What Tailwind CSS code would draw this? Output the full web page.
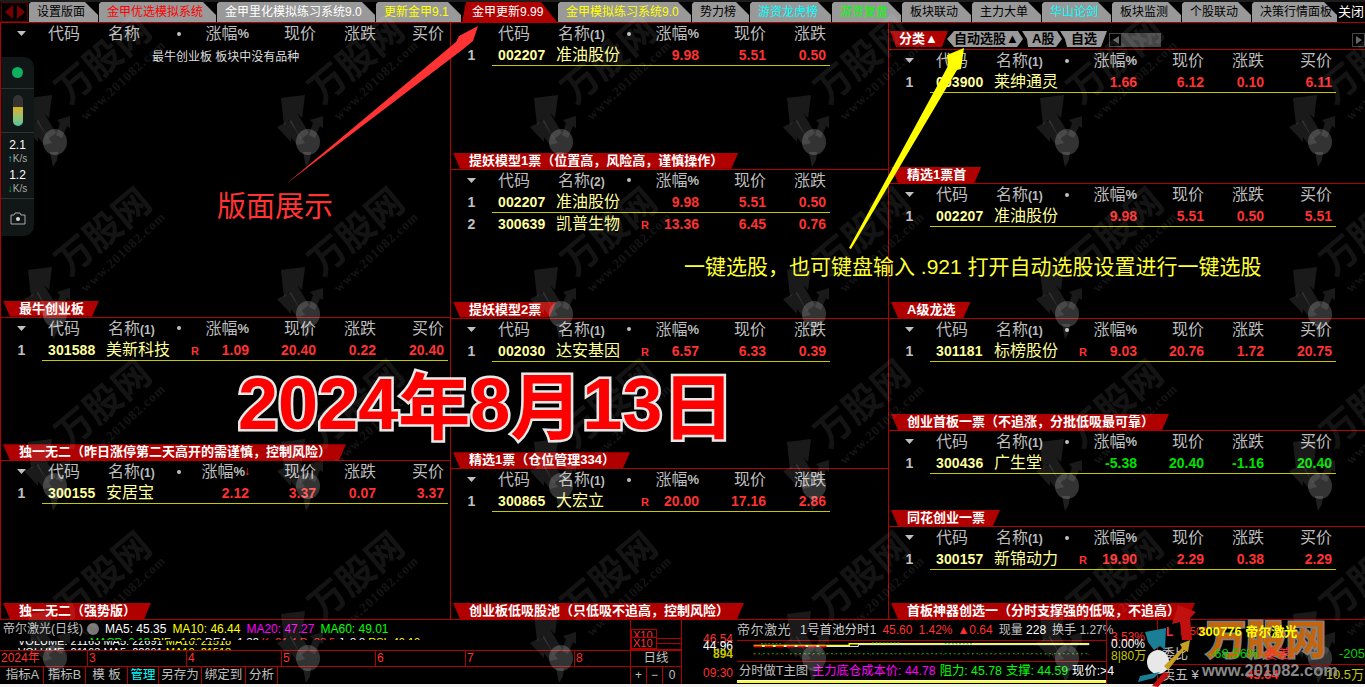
<!DOCTYPE html>
<html lang="zh-CN">
<head>
<meta charset="UTF-8">
<title>金甲更新9.99</title>
<script src="https://cdn.jsdelivr.net/npm/@tailwindcss/browser@4"></script>
</head>
<body class="bg-black">
<div class="relative w-[1365px] h-[687px] overflow-hidden bg-[#f4f4f4] font-['Liberation_Sans','Noto_Sans_CJK_SC',sans-serif] text-[#c0c0c0]">

  <!-- tab bar -->
  <div class="flex h-[23px] bg-black border-b border-[#b00000] border-t-2 border-t-[#1c1c1c]">
    <div class="w-[27px] h-[20px] ml-[1px] mr-[1px] border border-[#5a0000] flex items-center justify-center">
      <svg width="22" height="14" viewBox="0 0 22 14"><path d="M9 0v14L1 7z" fill="#7a0000"/><path d="M13 0v14l8-7z" fill="#7a0000"/></svg>
    </div>
    <div id="tabs" class="flex gap-px"></div>
    <div class="ml-px text-white text-[13px] leading-[20px]">关闭</div>
  </div>

  <!-- panels -->
  <div class="flex h-[597px] bg-black border-b border-[#b00000]">
    <div id="col1" class="w-[451px] flex flex-col border-l border-r border-[#b00000] ml-0"></div>
    <div id="col2" class="w-[438px] flex flex-col border-r border-[#b00000]"></div>
    <div class="w-[476px] flex flex-col">
      <div class="h-[27px] border-b border-[#b00000] flex items-end pb-[2px] pl-[1px] relative">
        <div class="w-[58px] h-[16px] bg-[#b00000] text-white font-bold text-[13px] leading-[16px] pl-[9px] [clip-path:polygon(0_0,100%_0,calc(100%-6px)_100%,6px_100%)]">分类▲</div>
        <div class="w-[76px] -ml-px h-[16px] bg-[#999] text-black font-bold text-[13px] leading-[16px] pl-[7px] [clip-path:polygon(7px_0,calc(100%-5px)_0,100%_50%,calc(100%-6px)_100%,7px_100%,0_50%)]">自动选股▲</div>
        <div class="w-[40px] -ml-px h-[16px] bg-[#999] text-black font-bold text-[13px] leading-[16px] pl-[10px] [clip-path:polygon(0_0,calc(100%-5px)_0,100%_50%,calc(100%-6px)_100%,6px_100%,5px_50%)]">A股</div>
        <div class="w-[47px] -ml-[2px] h-[16px] bg-[#999] text-black font-bold text-[13px] leading-[16px] pl-[11px] [clip-path:polygon(0_0,100%_0,calc(100%-6px)_100%,7px_100%,5px_50%)]">自选</div>
        <div class="ml-[2px] w-[13px] h-[14px] border border-[#444] flex items-center justify-center"><svg width="6" height="8"><path d="M6 0v8L0 4z" fill="#666"/></svg></div>
        <div class="w-[39px] h-[14px] bg-[#444]"></div>
        <div class="ml-auto w-[13px] h-[14px] border border-[#444] flex items-center justify-center"><svg width="6" height="8"><path d="M0 0v8l6-4z" fill="#666"/></svg></div>
      </div>
      <div id="col3" class="flex-1 flex flex-col"></div>
    </div>
  </div>

  <!-- bottom: day chart, buttons, intraday, quote -->
  <div class="flex h-[64px] bg-black text-[12px]">
    <div class="w-[630px] flex flex-col">
      <div class="h-[17px] flex items-center gap-[6px] pl-[3px] text-[12px] whitespace-nowrap">
        <span>帝尔激光(日线)</span>
        <span class="w-[12px] h-[12px] rounded-full bg-[#777] -ml-[2px]"></span>
        <span class="text-white">MA5: 45.35</span>
        <span class="text-[#ffff00]">MA10: 46.44</span>
        <span class="text-[#ff00ff]">MA20: 47.27</span>
        <span class="text-[#00ff00]">MA60: 49.01</span>
      </div>
      <div class="h-[13px] overflow-hidden whitespace-nowrap text-white leading-[11px] text-[11px]">
        <div class="h-[3px] overflow-hidden pl-[90px]"><span class="text-[#00ff00]">MACD: 0.12</span> <span class="text-[#ffff00]">DIF: -1.26</span> <span class="text-white">DEA: -1.32</span> <span class="text-[#ff3030]">K: 21.4 D: 33.5</span> <span class="text-white">J: 8.8</span> <span class="text-[#ffff00]">RSI: 40.10</span></div>
        <div class="h-[5px] overflow-hidden mt-px pl-[18px]"><div class="-mt-[5px]">VOLUME: 21163 MA5: 22691 <span class="text-[#ffff00]">MA10: 21518</span></div></div>
        <div class="h-[4px] overflow-hidden pl-[18px] mt-px">VOLUME: 21163 MA5: 22691 <span class="text-[#ffff00]">MA10: 21518</span></div>
      </div>
      <div class="h-[17px] flex border-t border-b border-[#b00000] text-[#ff3030] text-[12px] leading-[15px] pl-[1px]">
        <div class="w-[86px]">2024年</div>
        <div class="w-[99px] border-l border-[#b00000] pl-px">3</div>
        <div class="w-[95px] border-l border-[#b00000] pl-px">4</div>
        <div class="w-[94px] border-l border-[#b00000] pl-px">5</div>
        <div class="w-[90px] border-l border-[#b00000] pl-px">6</div>
        <div class="w-[109px] border-l border-[#b00000] pl-px">7</div>
        <div class="flex-1 border-l border-[#b00000] pl-px">8</div>
      </div>
      <div class="flex-1 flex text-[12.5px] leading-[17px] text-center">
        <div class="w-[44px] border-r border-[#b00000] pl-[2px]">指标A</div>
        <div class="w-[42px] border-r border-[#b00000]">指标B</div>
        <div class="w-[42px] border-r border-[#b00000]">模 板</div>
        <div class="w-[31px] border-r border-[#b00000] text-[#00ffff]">管理</div>
        <div class="w-[43px] border-r border-[#b00000]">另存为</div>
        <div class="w-[44px] border-r border-[#b00000]">绑定到</div>
        <div class="w-[32px] border-r border-[#b00000]">分析</div>
      </div>
    </div>

    <div class="w-[52px] flex flex-col border-l border-r border-[#b00000] text-[#ff3030]">
      <div class="h-[30px] flex flex-col pt-[9px] overflow-hidden">
        <div class="h-[8px] w-[26px] border border-b-0 border-[#b00000] text-[11px] leading-[10px] pl-px overflow-hidden">X10</div>
        <div class="h-[12px] w-full flex">
          <div class="w-[26px] border border-[#b00000] text-[11px] leading-[10px] pl-px">X10</div>
          <div class="flex-1 border-t border-b border-[#b00000] mt-[1px] h-[6px]"></div>
        </div>
        <div class="h-px bg-[#b00000]"></div>
      </div>
      <div class="h-[17px] border-t border-b border-[#b00000] text-[#c0c0c0] text-center text-[12.5px] leading-[15px]">日线</div>
      <div class="flex-1 flex text-center text-[12px] leading-[17px] text-[#c0c0c0]">
        <div class="w-[16px] border-r border-[#b00000]">+</div>
        <div class="w-[16px] border-r border-[#b00000]">−</div>
        <div class="flex-1">0</div>
      </div>
    </div>

    <div class="w-[55px] flex flex-col items-end pr-[4px] pt-[15px] text-[12px] font-bold">
      <div class="h-[8px] leading-[8px] text-[#ff3030] font-normal">46.54</div>
      <div class="h-[7px] leading-[7px] text-white font-normal">44.96</div>
      <div class="h-[9px] leading-[9px] text-[#c8c800]">894</div>
      <div class="mt-auto mb-[2px] text-[#ff3030] font-normal">09:30</div>
    </div>

    <div class="w-[369px] flex flex-col whitespace-nowrap">
      <div class="h-[20px] flex items-center gap-[6px] text-[12px] leading-[20px]">
        <span class="text-[13px] tracking-[.5px]">帝尔激光</span>
        <span class="ml-[3px] text-[12.5px] text-[#d0d0d0]">1号首池分时1</span>
        <span class="text-[#ff3030]">45.60</span>
        <span class="text-[#ff3030]">1.42%</span>
        <span class="text-[#ff3030] -ml-px">▲0.64</span>
        <span>现量 <span class="text-white">228</span></span>
        <span>换手 1.27%</span>
      </div>
      <svg class="h-[22px] w-[369px] border-t border-b border-[#b00000]" viewBox="0 0 369 22">
        <path d="M0 5H105V3H369" stroke="#ffff00" stroke-width="1.5" fill="none"/>
        <path d="M0 6H115V4H369" stroke="#fff" stroke-width="1" fill="none"/>
        <path d="M0 6H80" stroke="#ff0000" stroke-width="2" stroke-dasharray="9 3"/>
        <path d="M8 3H30M130 2H160M210 3H240" stroke="#00c800" stroke-width="1" stroke-dasharray="2 2"/>
        <path d="M0 14H369" stroke="#00d000" stroke-width="1" stroke-dasharray="2 3"/>
        <path d="M0 15H369" stroke="#ff0000" stroke-width="1" stroke-dasharray="1 7"/>
      </svg>
      <div class="h-[18px] flex items-center gap-[4px] text-[12.3px] pl-[2px]">
        <span>分时做T主图</span>
        <span class="text-[#ff00ff]">主力底仓成本价: 44.78</span>
        <span class="text-[#00ff00]">阻力: 45.78</span>
        <span class="text-[#00ff00]">支撑: 44.59</span>
        <span class="text-white">现价:&gt;4</span>
      </div>
      <div class="h-[3px] bg-[#ffff00] border-t border-white"></div>
    </div>

    <div class="w-[52px] flex flex-col border-l border-r border-[#b00000] pl-[4px] pt-[14px] text-[12px] whitespace-nowrap">
      <div class="h-[7px] leading-[7px] text-[#ff3030]">3.53%</div>
      <div class="h-[7px] leading-[7px] text-white">0.00%</div>
      <div class="h-[10px] leading-[10px] mt-[3px] text-[#c8c800]">8|80万</div>
    </div>

    <div class="relative z-10 flex-1 flex flex-col whitespace-nowrap">
      <div class="h-[26px] flex items-center pl-[8px] gap-[1px]">
        <span class="text-[#ff3030] font-bold">L</span>
        <span class="text-[#ff3030] text-[10px] leading-[10px] ml-[6px] w-[16px] text-center">R 500</span>
        <span class="text-[#ffff00] text-[13px] font-bold ml-[1px]">300776 帝尔激光</span>
      </div>
      <div class="h-[21px] flex items-center pl-[4px] border-b border-[#b00000] text-[13px]">
        <span class="w-[48px]">委比</span>
        <span class="text-[#00d000]">-68.56%</span>
        <span class="text-[#ff3030] ml-[6px]">委差</span>
        <span class="ml-auto text-[#00d000]">-205</span>
      </div>
      <div class="flex-1 flex items-center pl-[4px] pr-[1px] text-[13px]">
        <span class="w-[50px]">卖五 ¥</span>
        <span class="ml-[34px] font-bold text-[#ff3030]">45.64</span>
        <span class="ml-auto text-[#c8c800]">10.5万</span>
      </div>
    </div>
  </div>

  <!-- tiled site watermark -->
  <svg class="absolute inset-0 pointer-events-none" width="1365" height="687">
    <defs>
      <pattern id="wm" width="253" height="172" patternUnits="userSpaceOnUse">
        <text transform="translate(105,62) rotate(-40)" text-anchor="middle" dominant-baseline="middle" font-size="37" font-weight="700" font-family="Noto Sans CJK SC" fill="#fff" fill-opacity=".08">万股网</text>
        <text transform="translate(124,81) rotate(-43)" text-anchor="middle" dominant-baseline="middle" font-size="13" font-weight="700" letter-spacing="1" font-family="Liberation Serif" fill="#fff" fill-opacity=".08">www.201082.com</text>
        <polygon points="28,98 52,95 49,118 44,113 56,133 48,139 36,120 31,125" fill="#fff" fill-opacity=".1"/>
        <polygon points="57,120 70,116 70,128 67,126 62,138 56,135 60,123" fill="#fff" fill-opacity=".1"/>
        <polygon points="24,127 38,120 46,135 52,143 44,145 38,137 38,142" fill="#fff" fill-opacity=".1"/>
        <ellipse cx="55" cy="142" rx="12" ry="13" fill="#fff" fill-opacity=".2"/>
        <path d="M50 152 58 152 57 160 53 167z" fill="#fff" fill-opacity=".12"/>
      </pattern>
    </defs>
    <rect width="1365" height="687" fill="url(#wm)"/>
  </svg>

  <!-- speed widget -->
  <div class="absolute left-px top-[57px] w-[33px] h-[179px] bg-[#111616] rounded-r-[10px] flex flex-col items-center text-white">
    <div class="h-[32px] w-full flex items-center justify-center border-b border-[#2c3232]"><span class="w-[11px] h-[11px] rounded-full bg-[#0fb060]"></span></div>
    <div class="h-[44px] w-full flex items-center justify-center border-b border-[#2c3232]">
      <div class="w-[10px] h-[31px] rounded-full bg-[#333] overflow-hidden flex flex-col justify-end"><div class="h-[19px] bg-linear-to-b from-[#d8b000] to-[#40c8a0]"></div></div>
    </div>
    <div class="h-[66px] w-full flex flex-col items-center border-b border-[#2c3232] pt-[6px] text-[12px] leading-[13px]">
      <span>2.1</span>
      <span class="text-[10px] text-[#aaa] whitespace-nowrap"><span class="text-[#00e0e0]">↑</span>K/s</span>
      <span class="mt-[4px]">1.2</span>
      <span class="text-[10px] text-[#aaa] whitespace-nowrap"><span class="text-[#00c040]">↓</span>K/s</span>
    </div>
    <div class="flex-1 flex items-center justify-center">
      <svg width="16" height="14" viewBox="0 0 16 14" fill="none"><path d="M1 4h3l1-2h5l1 2h4v9H1z" stroke="#aaa"/><circle cx="8" cy="8" r="2" fill="#ddd"/></svg>
    </div>
  </div>

  <!-- annotations drawn over the screenshot -->
  <svg class="absolute inset-0 pointer-events-none" width="1365" height="687">
    <polygon points="286,184 456,42 459,36 478,26 473,41 462,50" fill="#ff3333"/>
    <polygon points="849,248 948,66 947,55 964,48 961,69 957,70 851,249" fill="#ffff00"/>
  </svg>
  <div class="absolute left-[217px] top-[186px] text-[29px] leading-[42px] text-[#ff3333]">版面展示</div>
  <div class="absolute left-[684px] top-[252px] text-[21px] leading-[30px] text-[#ffff33] whitespace-nowrap">一键选股，也可键盘输入 .921 打开自动选股设置进行一键选股</div>
  <div class="absolute left-[238px] top-[359px] text-[72px] leading-[90px] font-bold text-[#ff0000] whitespace-nowrap [-webkit-text-stroke:5px_#e8e8e8] [paint-order:stroke_fill]">2024<span class="relative top-[4px]">年</span>8<span class="relative top-[4px]">月</span>13<span class="relative top-[4px]">日</span></div>

  <!-- site logo, bottom right -->
  <svg class="absolute z-20 left-[1130px] top-[600px] pointer-events-none" width="80" height="87" viewBox="0 0 80 87">
    <polygon points="48,5 66,12 60,18 62,40 52,40 50,22 42,24" fill="#c01010"/>
    <polygon points="15,32 36,28 35,50 30,46 24,50 18,42" fill="#1a7f96"/>
    <ellipse cx="28" cy="62" rx="11" ry="12" fill="#e8e8e8"/>
    <polygon points="34,66 52,48 50,44 60,40 58,52 54,50 38,70" fill="#c8a020"/>
    <polygon points="30,72 10,76 8,82 24,78" fill="#1a7f96"/>
    <polygon points="34,72 22,86 28,87 40,74" fill="#c01010"/>
  </svg>
  <div class="absolute z-[5] left-[1206px] top-[612px] text-[40px] leading-[56px] font-bold text-[#c4640c] whitespace-nowrap [-webkit-text-stroke:3px_#808080] [paint-order:stroke_fill]">万股网</div>
  <div class="absolute z-20 left-[1202px] top-[660px] text-[16.5px] leading-[20px] font-bold text-[#888] whitespace-nowrap">www.201082.com</div>
</div>

<script>
  // top tabs: label, width, classes
  const tabs = [
    ["设置版面", 69, "text-black"], ["金甲优选模拟系统", 117, "text-[#ff0000]"],
    ["金甲里化模拟练习系统9.0", 158, "text-white"], ["更新金甲9.1", 85, "text-[#ffff00]"],
    ["金甲更新9.99", 95, "active"], ["金甲模拟练习系统9.0", 133, "text-[#ffff00]"],
    ["势力榜", 57, "text-black"], ["游资龙虎榜", 81, "text-[#00ffff]"], ["游资复盘", 69, "text-[#00ff00]"],
    ["板块联动", 69, "text-black"], ["主力大单", 69, "text-black"], ["华山论剑", 69, "text-[#00ffff]"],
    ["板块监测", 69, "text-black"], ["个股联动", 69, "text-black"], ["决策行情面板", 85, "text-black"]
  ]
  document.getElementById("tabs").innerHTML = tabs.map(([label, w, cls]) => {
    if (cls == "active") {
      return `<div style="width:${w}px" class="h-[20px] bg-[#b00000] text-white text-[12px] leading-[20px] pl-[10px] whitespace-nowrap [clip-path:polygon(4px_0,calc(100%-16px)_0,100%_100%,0_100%)]">${label}</div>`
    }
    return `<div style="width:${w}px" class="h-[20px] bg-[#999999] ${cls} text-[12px] leading-[20px] pl-[8px] whitespace-nowrap [clip-path:polygon(2px_0,calc(100%-13px)_0,100%_13px,100%_100%,0_100%,0_2px)]">${label}</div>`
  }).join("")

  function header(p, wide) {
    return `<div class="flex h-[21px] text-[16px] leading-[21px] text-[#bdbdbd]">
      <div class="w-[41px] flex items-center justify-center">${p.noArrow ? "" : '<svg width="9" height="5"><path d="M0 0h9L4.5 5z" fill="#c0c0c0"/></svg>'}</div>
      <div class="w-[63px] pl-[6px]">代码</div>
      <div class="w-[60px] pl-[3px] whitespace-nowrap">名称<span class="font-bold text-[12px]">${p.count || ""}</span></div>
      <div class="w-[40px] flex items-center pl-[12px]"><span class="w-[4px] h-[4px] rounded-full bg-[#c0c0c0]"></span></div>
      <div class="w-[44px] flex justify-end whitespace-nowrap">${p.sorted ? '<span class="flex">涨幅<b class="text-[13px]">%</b><span class="text-[#ff3030] text-[12px] -ml-[1px] -mr-[1px]">↓</span></span>' : '涨幅<b class="text-[13px]">%</b>'}</div>
      <div class="w-[67px] text-right">现价</div>
      <div class="w-[60px] text-right">涨跌</div>
      ${wide ? '<div class="w-[68px] text-right">买价</div>' : ""}
    </div>`
  }

  function row(r, i, wide, first) {
    const color = r.down ? "text-[#00e000]" : "text-[#ff3232]"
    return `<div class="flex h-[22px]">
      <div class="w-[41px] text-center font-bold text-[14px] leading-[22px]">${i + 1}</div>
      <div class="flex h-[22px] ${wide ? "w-[406px]" : "w-[338px]"} ${first ? "border-b border-[#c8c800]" : ""} leading-[22px] font-bold text-[14px] ${color}">
        <div class="w-[63px] pl-[6px] text-[#ffff99] tracking-[.1px]">${r.code}</div>
        <div class="w-[60px] pl-px text-[16px] font-normal text-[#ffff99] whitespace-nowrap">${r.name}</div>
        <div class="w-[40px] pl-[26px] text-[11px] leading-[25px]">${r.flag ? "R" : ""}</div>
        <div class="w-[44px] text-right">${r.v[0]}</div>
        <div class="w-[67px] text-right">${r.v[1]}</div>
        <div class="w-[60px] text-right">${r.v[2]}</div>
        ${wide ? `<div class="w-[68px] text-right">${r.v[3]}</div>` : ""}
      </div>
    </div>`
  }

  function panel(p, wide) {
    return `<div style="height:${p.h}px" class="flex flex-col ${p.last ? "" : "border-b border-[#b00000]"} overflow-hidden">
      ${header(p, wide)}
      ${(p.rows || []).map((r, i) => row(r, i, wide, i == 0)).join("")}
      ${p.empty ? `<div class="text-[12px] leading-[22px] text-[#dddddd] pl-[151px] mt-[2px]">${p.empty}</div>` : ""}
      <div class="mt-auto ml-[2px] self-start h-[16px] bg-[#b00000] text-white font-bold text-[13px] leading-[16px] pl-[16px] pr-[15px] whitespace-nowrap [clip-path:polygon(0_0,100%_0,calc(100%-7px)_100%,7px_100%)]">${p.title}</div>
    </div>`
  }

  const zy = { code: "002207", name: "准油股份", v: ["9.98", "5.51", "0.50", "5.51"] }

  const col1 = [
    { h: 295, empty: "最牛创业板 板块中没有品种", title: "最牛创业板" },
    { h: 144, count: "(1)", title: "独一无二（昨日涨停第二天高开的需谨慎，控制风险）",
      rows: [{ code: "301588", name: "美新科技", flag: 1, v: ["1.09", "20.40", "0.22", "20.40"] }] },
    { h: 158, last: 1, count: "(1)", sorted: 1, title: "独一无二（强势版）",
      rows: [{ code: "300155", name: "安居宝", v: ["2.12", "3.37", "0.07", "3.37"] }] }
  ]

  const col2 = [
    { h: 147, noArrow: 1, count: "(1)", title: "提妖模型1票（位置高，风险高，谨慎操作）", rows: [zy] },
    { h: 149, count: "(2)", title: "提妖模型2票",
      rows: [zy, { code: "300639", name: "凯普生物", flag: 1, v: ["13.36", "6.45", "0.76"] }] },
    { h: 151, count: "(1)", title: "精选1票（仓位管理334）",
      rows: [{ code: "002030", name: "达安基因", flag: 1, v: ["6.57", "6.33", "0.39"] }] },
    { h: 150, last: 1, count: "(1)", title: "创业板低吸股池（只低吸不追高，控制风险）",
      rows: [{ code: "300865", name: "大宏立", flag: 1, v: ["20.00", "17.16", "2.86"] }] }
  ]

  const col3 = [
    { h: 134, count: "(1)", title: "精选1票首",
      rows: [{ code: "003900", name: "莱绅通灵", v: ["1.66", "6.12", "0.10", "6.11"] }] },
    { h: 135, count: "(1)", title: "A级龙选", rows: [zy] },
    { h: 112, count: "(1)", title: "创业首板一票（不追涨，分批低吸最可靠）",
      rows: [{ code: "301181", name: "标榜股份", flag: 1, v: ["9.03", "20.76", "1.72", "20.75"] }] },
    { h: 96, count: "(1)", title: "同花创业一票",
      rows: [{ code: "300436", name: "广生堂", down: 1, v: ["-5.38", "20.40", "-1.16", "20.40"] }] },
    { h: 92, last: 1, count: "(1)", title: "首板神器创选一（分时支撑强的低吸，不追高）",
      rows: [{ code: "300157", name: "新锦动力", flag: 1, v: ["19.90", "2.29", "0.38", "2.29"] }] }
  ]

  document.getElementById("col1").innerHTML = col1.map(p => panel(p, true)).join("")
  document.getElementById("col2").innerHTML = col2.map(p => panel(p, false)).join("")
  document.getElementById("col3").innerHTML = col3.map(p => panel(p, true)).join("")
</script>
</body>
</html>
